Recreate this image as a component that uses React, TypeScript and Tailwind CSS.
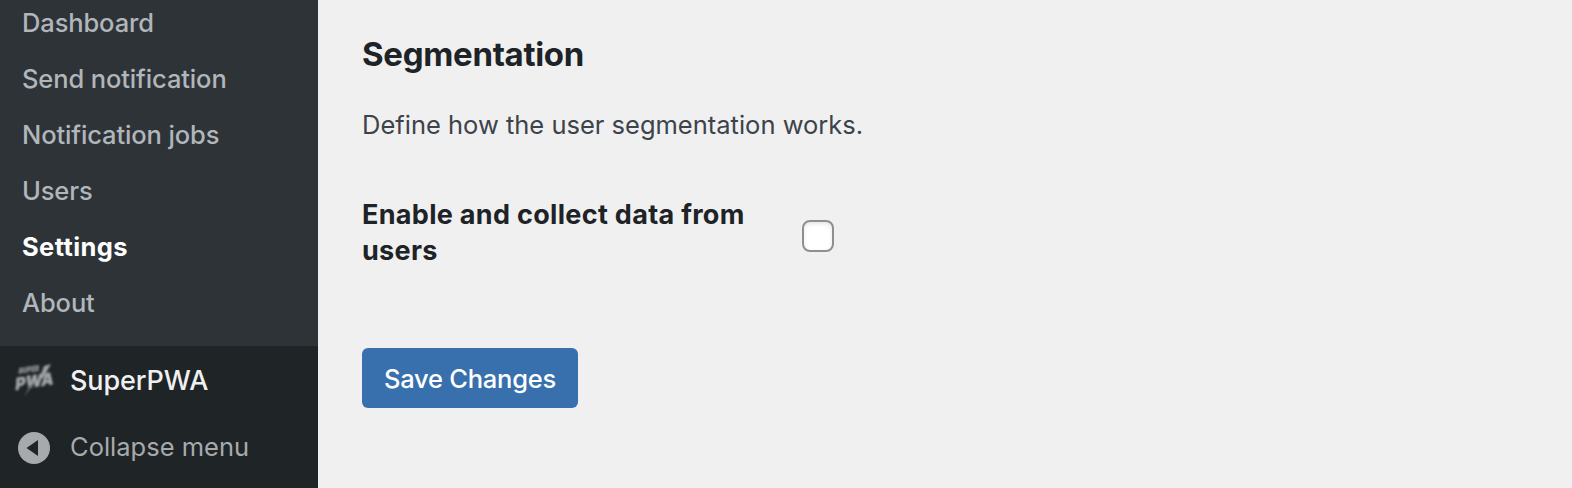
const items = ["Dashboard", "Send notification", "Notification jobs", "Users", "Settings", "About"];

function SuperPwaLogo() {
  return (
    <svg width="40" height="40" viewBox="0 0 40 40" className="block overflow-visible blur-[0.8px]" aria-hidden="true">
      <g transform="translate(4.2 13.8) rotate(-8) skewX(-14)" fill="#85888a" stroke="#85888a" strokeWidth="0.5" fontFamily="Inter, sans-serif" fontWeight="900">
        <text x="0" y="0" fontSize="7.6" textLength="21" lengthAdjust="spacingAndGlyphs">SUPER</text>
      </g>
      <g transform="translate(1 30.2) rotate(-9) skewX(-14)" fill="#a3a5a7" stroke="#a3a5a7" strokeWidth="0.4" fontFamily="Inter, sans-serif" fontWeight="900">
        <text x="0" y="0" fontSize="16.5" textLength="38.5" lengthAdjust="spacingAndGlyphs">PWA</text>
      </g>
      <path d="M30 6 L37 4 L29 18 L25 20 Z" fill="#9fa2a4" />
      <path d="M16 25 L20 24 L13 33 L10 37 Z" fill="#66696c" />
    </svg>
  );
}

export default function App() {
  return (
    <div className="flex h-[488px] w-full overflow-hidden bg-[#f0f0f0] font-['Inter','Liberation_Sans',sans-serif]">
      <nav className="flex w-[318px] shrink-0 flex-col bg-[#1f2427]">
        <ul className="h-[346px] bg-[#2e3337] pl-[22px]">
          {items.map((t) => (
            <li
              key={t}
              className={
                t === "Settings"
                  ? "mt-[-5px] mb-[5px] h-14 text-[25.5px] leading-14 font-bold tracking-[0.4px] text-white"
                  : "mt-[-5px] mb-[5px] h-14 text-[25.5px] leading-14 font-medium tracking-[-0.12px] text-[#b0b6bb]"
              }
            >
              {t}
            </li>
          ))}
        </ul>
        <a className="flex h-[68px] items-center pl-[14px] text-[#f0f0f0]">
          <SuperPwaLogo />
          <span className="ml-4 pt-0.5 text-[27px] leading-[36px] font-medium tracking-[-0.1px]">SuperPWA</span>
        </a>
        <button className="flex h-[68px] items-center pl-[18px] text-[#a7aaad]">
          <svg width="32" height="32" viewBox="0 0 32 32" aria-hidden="true">
            <circle cx="16" cy="16" r="16" fill="#a7aaad" />
            <path d="M8.5 16 20 8v16z" fill="#1f2427" />
          </svg>
          <span className="ml-5 pb-0.5 text-[25.5px]">Collapse menu</span>
        </button>
      </nav>
      <main className="pt-[34px] pl-11">
        <h2 className="text-[33px] leading-10 font-bold tracking-[-0.3px] text-[#1d2327]">Segmentation</h2>
        <p className="mt-[31px] text-[25.5px] leading-10 text-[#3c434a]">Define how the user segmentation works.</p>
        <label className="mt-[52px] flex">
          <span className="w-[440px] pr-5 text-[27px] leading-9 font-bold tracking-[0.31px] text-[#1d2327]">
            Enable and collect data from users
          </span>
          <input
            type="checkbox"
            className="mt-[23px] h-8 w-8 appearance-none rounded-lg border-2 border-[#8c8f94] bg-white shadow-[inset_0_2px_4px_rgba(0,0,0,0.1)]"
          />
        </label>
        <button className="mt-[79px] h-[60px] w-[216px] rounded-md bg-[#3870ad] pt-0.5 text-[25.5px] font-medium tracking-[-0.25px] text-white">
          Save Changes
        </button>
      </main>
    </div>
  );
}
